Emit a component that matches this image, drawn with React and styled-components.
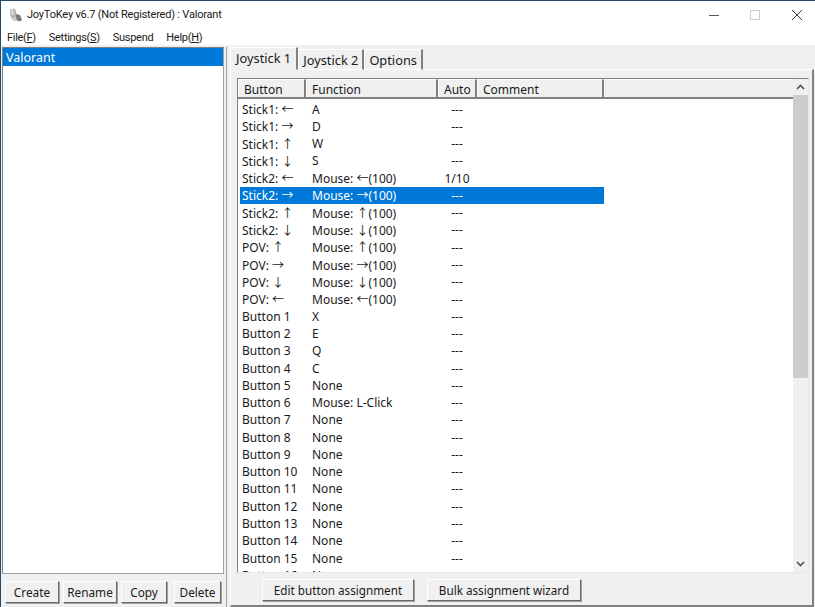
import React from "react";
import styled, { createGlobalStyle } from "styled-components";

const GlobalStyle = createGlobalStyle`
  html, body {
    margin: 0;
    padding: 0;
    background: #f0f0f0;
  }
  * {
    box-sizing: border-box;
  }
`;

const Win = styled.div`
  width: 815px;
  height: 607px;
  overflow: hidden;
  display: flex;
  flex-direction: column;
  background: #f0f0f0;
  color: #1a1a1a;
  border-left: 1px solid #23496b;
  font-family: "Noto Sans", "Noto Sans CJK JP", sans-serif;
  font-size: 12px;
`;

const TitleBar = styled.div`
  height: 30px;
  flex: none;
  display: flex;
  align-items: center;
  background: #fff;
  border-top: 1px solid #23496b;
  padding: 0 0 2px 7px;
`;

const TitleText = styled.div`
  margin-left: 3px;
  flex: 1;
  white-space: nowrap;
  font-family: Roboto, sans-serif;
  font-size: 11px;
  letter-spacing: -0.2px;
`;

const CaptionButton = styled.div`
  width: 41.5px;
  height: 27px;
  display: flex;
  align-items: center;
  justify-content: center;
  &:last-child {
    margin-right: -2.5px;
  }
`;

const MenuBar = styled.div`
  height: 15px;
  flex: none;
  display: flex;
  align-items: center;
  background: #fff;
  padding-left: 6px;
  gap: 13px;
  font-family: Roboto, sans-serif;
  font-size: 11px;
  letter-spacing: -0.3px;
`;

const MenuItem = styled.div`
  white-space: nowrap;
`;

const Body = styled.div`
  flex: 1;
  min-height: 0;
  display: flex;
  padding-top: 2px;
`;

const LeftPane = styled.div`
  width: 224px;
  flex: none;
  padding: 0 1px 4px 1px;
  display: flex;
  flex-direction: column;
`;

const ProfileList = styled.div`
  flex: 1;
  background: #fff;
  border: 1px solid #a0a0a0;
  border-top: 1px solid #808080;
  border-left: 1px solid #808080;
`;

const ProfileItem = styled.div`
  height: 18px;
  line-height: 19px;
  padding-left: 3px;
  background: #0078d7;
  color: #fff;
  font-size: 12.5px;
`;

const ButtonRow = styled.div`
  display: flex;
  gap: 4px;
  padding: 7px 3px 0 3px;
  font-size: 11.8px;
`;

const PushButton = styled.div`
  width: ${(p) => p.$w}px;
  height: 22px;
  margin-left: ${(p) => (p.$push ? "auto" : "0")};
  display: flex;
  align-items: center;
  justify-content: center;
  background: #f0f0f0;
  border-top: 1px solid #fff;
  border-left: 1px solid #fff;
  border-right: 1px solid #696969;
  border-bottom: 1px solid #696969;
  box-shadow: 1px 1px 0 #a0a0a0;
  white-space: nowrap;
`;

const Splitter = styled.div`
  width: 4px;
  flex: none;
  background: #a0a0a0;
  border-left: 1px solid #f0f0f0;
  border-right: 2px solid #f0f0f0;
`;

const RightPane = styled.div`
  flex: 1;
  min-width: 0;
  display: flex;
  flex-direction: column;
  padding: 0 1px 0 1px;
`;

const TabStrip = styled.div`
  height: 23px;
  flex: none;
  display: flex;
  align-items: flex-end;
  position: relative;
  z-index: 1;
  margin-bottom: -1px;
`;

const Tab = styled.div`
  height: ${(p) => (p.$active ? 23 : 21)}px;
  padding: ${(p) => (p.$active ? "0 5px 2px" : "0 4px")};
  display: flex;
  align-items: center;
  font-size: 12.8px;
  white-space: nowrap;
  background: #f0f0f0;
  border-top: 1px solid #fff;
  border-left: 1px solid #fff;
  border-right: 2px solid #808080;
  border-bottom: ${(p) => (p.$active ? "1px solid #f0f0f0" : "1px solid #fff")};
`;

const TabPanel = styled.div`
  flex: 1;
  min-height: 0;
  display: flex;
  flex-direction: column;
  border-top: 1px solid #fff;
  border-left: 1px solid #fff;
  border-right: 2px solid #808080;
  border-bottom: 2px solid #808080;
  padding: 8px 3px 0 6px;
`;

const ListView = styled.div`
  height: 495px;
  flex: none;
  display: flex;
  background: #fff;
  border-top: 1px solid #808080;
  border-left: 1px solid #808080;
  border-right: 1px solid #e8e8e8;
  border-bottom: 1px solid #e8e8e8;
  overflow: hidden;
`;

const ListMain = styled.div`
  flex: 1;
  min-width: 0;
  display: flex;
  flex-direction: column;
  overflow: hidden;
`;

const HeaderRow = styled.div`
  height: 20px;
  flex: none;
  display: flex;
  background: #f0f0f0;
  border-bottom: 2px solid #808080;
`;

const HeaderCell = styled.div`
  width: ${(p) => p.$w}px;
  flex: ${(p) => (p.$grow ? 1 : "none")};
  padding-left: 5px;
  line-height: 20px;
  white-space: nowrap;
  border-top: 1px solid #fff;
  border-left: 1px solid #fff;
  border-right: ${(p) => (p.$grow ? "none" : "2px solid #808080")};
`;

const Rows = styled.div`
  padding-top: 1.5px;
`;

const Row = styled.div`
  width: 364px;
  height: 17.27px;
  margin-left: 2px;
  display: flex;
  align-items: center;
  white-space: nowrap;
  background: ${(p) => (p.$selected ? "#0078d7" : "transparent")};
  color: ${(p) => (p.$selected ? "#fff" : "inherit")};
`;

const ButtonCell = styled.div`
  width: 70px;
  flex: none;
  padding-left: 2px;
`;

const FunctionCell = styled.div`
  width: 129px;
  flex: none;
  padding-left: 2px;
`;

const AutoCell = styled.div`
  width: 36px;
  flex: none;
  text-align: center;
`;

const ScrollBar = styled.div`
  width: 15px;
  flex: none;
  display: flex;
  flex-direction: column;
  background: #f0f0f0;
`;

const ScrollArrow = styled.div`
  height: 16px;
  flex: none;
  display: flex;
  align-items: center;
  justify-content: center;
`;

const ScrollThumb = styled.div`
  height: 283px;
  flex: none;
  background: #cdcdcd;
`;

const ScrollTrack = styled.div`
  flex: 1;
`;

const BottomBar = styled.div`
  display: flex;
  gap: 13px;
  padding: 6px 0 0 25px;
  font-size: 11.7px;
`;

const arrows = { l: "←", r: "→", u: "↑", d: "↓" };

const rows = [
  [`Stick1: ${arrows.l}`, "A"],
  [`Stick1: ${arrows.r}`, "D"],
  [`Stick1: ${arrows.u}`, "W"],
  [`Stick1: ${arrows.d}`, "S"],
  [`Stick2: ${arrows.l}`, `Mouse: ${arrows.l}(100)`, "1/10"],
  [`Stick2: ${arrows.r}`, `Mouse: ${arrows.r}(100)`],
  [`Stick2: ${arrows.u}`, `Mouse: ${arrows.u}(100)`],
  [`Stick2: ${arrows.d}`, `Mouse: ${arrows.d}(100)`],
  [`POV: ${arrows.u}`, `Mouse: ${arrows.u}(100)`],
  [`POV: ${arrows.r}`, `Mouse: ${arrows.r}(100)`],
  [`POV: ${arrows.d}`, `Mouse: ${arrows.d}(100)`],
  [`POV: ${arrows.l}`, `Mouse: ${arrows.l}(100)`],
  ["Button 1", "X"],
  ["Button 2", "E"],
  ["Button 3", "Q"],
  ["Button 4", "C"],
  ["Button 5", "None"],
  ["Button 6", "Mouse: L-Click"],
  ["Button 7", "None"],
  ["Button 8", "None"],
  ["Button 9", "None"],
  ["Button 10", "None"],
  ["Button 11", "None"],
  ["Button 12", "None"],
  ["Button 13", "None"],
  ["Button 14", "None"],
  ["Button 15", "None"],
  ["Button 16", "None"],
];

const AppIcon = () => (
  <svg width="16" height="16" viewBox="0 0 16 16">
    <path d="M2 2.5l4-1 2 2 .5 6L4 12 2.5 9z" fill="#b4b4b4" />
    <path d="M3 3l2-.5 1 5-2 1z" fill="#e0e0e0" />
    <path d="M8 7l4 1 2 5-2 1.5-4-1.5z" fill="#7a7a7a" />
    <path d="M4 12l4-2 1 3.5-3 .5z" fill="#c8c8c8" />
  </svg>
);

const App = () => {
  return (
    <Win>
      <GlobalStyle />
      <TitleBar>
        <AppIcon />
        <TitleText>JoyToKey v6.7 (Not Registered) : Valorant</TitleText>
        <CaptionButton>
          <svg width="10" height="10" viewBox="0 0 10 10">
            <path d="M0 5.5h10" stroke="#555" strokeWidth="1" />
          </svg>
        </CaptionButton>
        <CaptionButton>
          <svg width="10" height="10" viewBox="0 0 10 10">
            <rect x="0.5" y="0.5" width="9" height="9" fill="none" stroke="#ccc" />
          </svg>
        </CaptionButton>
        <CaptionButton>
          <svg width="10" height="10" viewBox="0 0 10 10">
            <path d="M0 0l10 10M10 0L0 10" stroke="#333" strokeWidth="1" />
          </svg>
        </CaptionButton>
      </TitleBar>
      <MenuBar>
        <MenuItem>File(<u>F</u>)</MenuItem>
        <MenuItem>Settings(<u>S</u>)</MenuItem>
        <MenuItem>Suspend</MenuItem>
        <MenuItem>Help(<u>H</u>)</MenuItem>
      </MenuBar>
      <Body>
        <LeftPane>
          <ProfileList>
            <ProfileItem>Valorant</ProfileItem>
          </ProfileList>
          <ButtonRow>
            <PushButton $w={54}>Create</PushButton>
            <PushButton $w={54}>Rename</PushButton>
            <PushButton $w={46}>Copy</PushButton>
            <PushButton $w={47} $push>Delete</PushButton>
          </ButtonRow>
        </LeftPane>
        <Splitter />
        <RightPane>
          <TabStrip>
            <Tab $active>Joystick 1</Tab>
            <Tab>Joystick 2</Tab>
            <Tab>Options</Tab>
          </TabStrip>
          <TabPanel>
            <ListView>
              <ListMain>
                <HeaderRow>
                  <HeaderCell $w={68}>Button</HeaderCell>
                  <HeaderCell $w={132}>Function</HeaderCell>
                  <HeaderCell $w={39}>Auto</HeaderCell>
                  <HeaderCell $w={127}>Comment</HeaderCell>
                  <HeaderCell $grow />
                </HeaderRow>
                <Rows>
                  {rows.map(([button, fn, auto], i) => (
                    <Row key={button} $selected={i === 5}>
                      <ButtonCell>{button}</ButtonCell>
                      <FunctionCell>{fn}</FunctionCell>
                      <AutoCell>{auto || "---"}</AutoCell>
                    </Row>
                  ))}
                </Rows>
              </ListMain>
              <ScrollBar>
                <ScrollArrow>
                  <svg width="9" height="6" viewBox="0 0 9 6">
                    <path d="M1 5l3.5-3.5L8 5" fill="none" stroke="#505050" strokeWidth="1.6" />
                  </svg>
                </ScrollArrow>
                <ScrollThumb />
                <ScrollTrack />
                <ScrollArrow>
                  <svg width="9" height="6" viewBox="0 0 9 6">
                    <path d="M1 1l3.5 3.5L8 1" fill="none" stroke="#505050" strokeWidth="1.6" />
                  </svg>
                </ScrollArrow>
              </ScrollBar>
            </ListView>
            <BottomBar>
              <PushButton $w={152}>Edit button assignment</PushButton>
              <PushButton $w={154}>Bulk assignment wizard</PushButton>
            </BottomBar>
          </TabPanel>
        </RightPane>
      </Body>
    </Win>
  );
};

export default App;
